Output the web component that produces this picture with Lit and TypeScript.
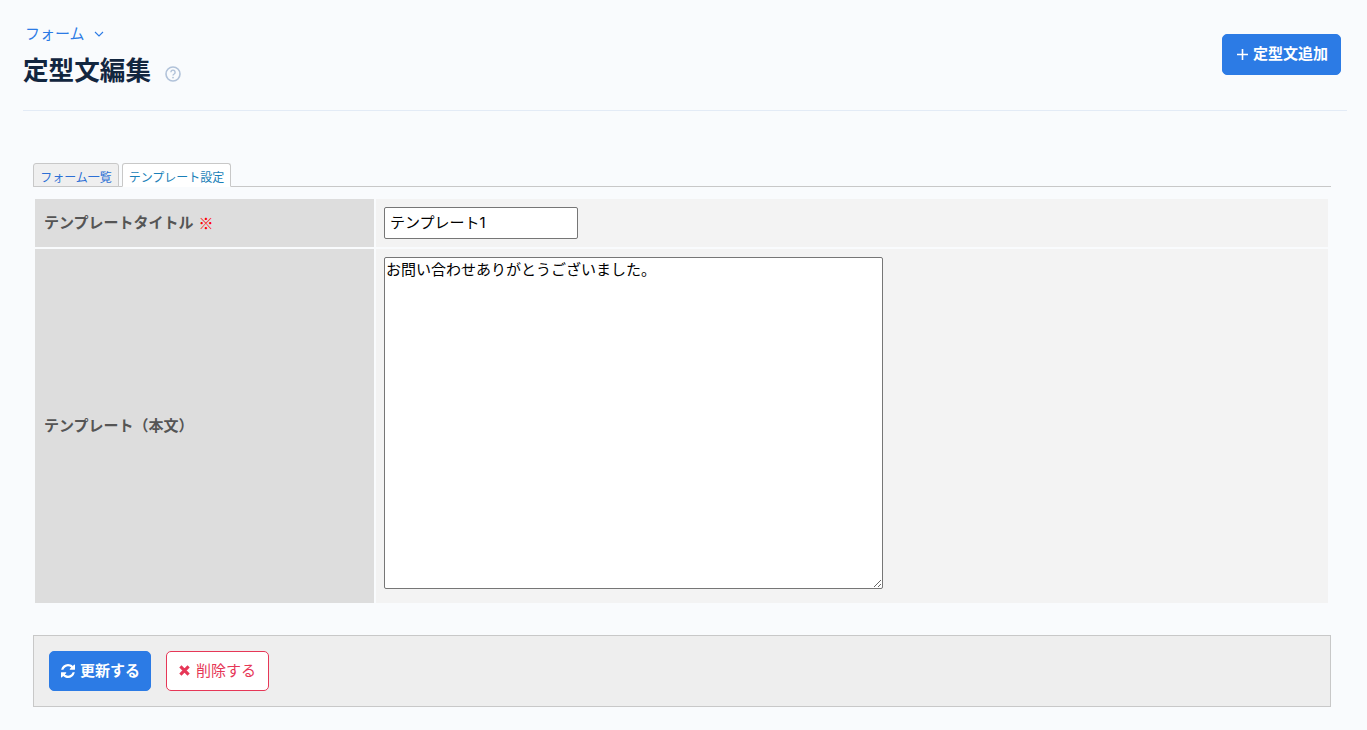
import { LitElement, html, css } from "lit";
import { customElement } from "lit/decorators.js";

@customElement("app-root")
export class AppRoot extends LitElement {
  static styles = css`
    :host {
      display: block;
      min-height: 730px;
      background: #f9fbfd;
      font-family: Inter, "Noto Sans CJK JP", sans-serif;
      box-sizing: border-box;
    }
    * { box-sizing: border-box; }
    .page { padding: 0 20px 0 23px; }
    .header {
      height: 111px;
      border-bottom: 1px solid #e3ebf6;
      display: flex;
      justify-content: space-between;
      align-items: flex-start;
    }
    .crumb {
      margin-top: 24px;
      height: 20px;
      padding-left: 2px;
      display: flex;
      align-items: center;
      gap: 9px;
      color: #2c7be5;
      font-size: 15px;
      line-height: 20px;
    }
    .title {
      margin-top: 7px;
      display: flex;
      align-items: center;
      gap: 14px;
      height: 40px;
    }
    h1 {
      margin: 0;
      font-size: 25.6px;
      line-height: 40px;
      font-weight: 700;
      color: #12263f;
    }
    .help { margin-top: 5px; display: block; }
    .btn {
      display: inline-flex;
      align-items: center;
      justify-content: center;
      border-radius: 5px;
      font-size: 15px;
      line-height: 20px;
      font-family: inherit;
      height: 40px;
      border: 1px solid #2c7be5;
      background: #2c7be5;
      color: #fff;
      font-weight: 600;
      white-space: nowrap;
      padding: 0 0 1px;
    }
    .add { width: 119px; height: 41px; margin-top: 34px; margin-right: 6px; gap: 5px; padding-left: 2px; }
    .content { padding: 52px 16px 0 10px; }
    .tabs {
      display: flex;
      gap: 3px;
      height: 24px;
      border-bottom: 1px solid #c8c8c8;
    }
    .tab {
      height: 24px;
      border: 1px solid #c8c8c8;
      border-radius: 3px 3px 0 0;
      font-size: 12px;
      line-height: 27px;
      text-align: center;
      background: #efefef;
      color: #2c6fd5;
    }
    .tab.one { width: 86px; }
    .tab.two {
      width: 109px;
      background: #fff;
      border-bottom-color: #fff;
      color: #1a7fb8;
    }
    .form {
      margin-top: 12px;
      padding: 0 3px 0 2px;
      display: grid;
      grid-template-columns: 339px 1fr;
      grid-template-rows: 48px 354px;
      gap: 2px;
    }
    .th {
      background: #dddddd;
      color: #555;
      font-size: 15px;
      line-height: 20px;
      font-weight: 700;
      padding: 0 0 1px 9px;
      display: flex;
      align-items: center;
      gap: 5px;
    }
    .req {
      color: #f00;
      font-weight: 400;
      font-size: 15px;
      font-family: "Noto Sans CJK JP", sans-serif;
    }
    .td { background: #f3f3f3; padding: 8px; }
    input {
      display: block;
      width: 194px;
      height: 32px;
      border: 1px solid #767676;
      border-radius: 2px;
      background: #fff;
      padding: 0 5px 4px;
      font-family: inherit;
      font-size: 15px;
      color: #000;
      outline: none;
    }
    textarea {
      display: block;
      width: 499px;
      height: 332px;
      border: 1px solid #767676;
      border-radius: 2px;
      background: #fff;
      padding: 2px 1px 0;
      margin: 0;
      font-family: inherit;
      font-size: 15px;
      line-height: 20px;
      color: #000;
      outline: none;
    }
    .bar {
      margin-top: 32px;
      height: 72px;
      border: 1px solid #c8c8c8;
      background: #eeeeee;
      padding: 15px;
      display: flex;
      gap: 15px;
    }
    .save { width: 102px; gap: 5px; padding-left: 1px; }
    .del {
      width: 103px;
      background: #fff;
      border-color: #e63757;
      color: #e63757;
      font-weight: 400;
      gap: 6px;
    }
  `;

  render() {
    return html`
      <div class="page">
        <div class="header">
          <div>
            <div class="crumb">
              <span>フォーム</span>
              <svg width="10" height="6" viewBox="0 0 10 6" fill="none" stroke="#2c7be5" stroke-width="1.1"><path d="M1 1l4 4 4-4"/></svg>
            </div>
            <div class="title">
              <h1>定型文編集</h1>
              <svg class="help" width="16" height="16" viewBox="0 0 16 16" fill="none" stroke="#b1c2d9" stroke-width="1.6">
                <circle cx="8" cy="8" r="7"/>
                <path d="M5.900 6.200a2.100 2.100 0 1 1 3.200 1.800c-.7.4-1.100.8-1.100 1.600" stroke-width="1.400"/>
                <circle cx="8" cy="11.600" r=".9" fill="#b1c2d9" stroke="none"/>
              </svg>
            </div>
          </div>
          <button class="btn add">
            <svg width="11" height="11" viewBox="0 0 11 11" stroke="#fff" stroke-width="1.6"><path d="M5.500 0v11M0 5.500h11"/></svg>
            <span>定型文追加</span>
          </button>
        </div>
        <div class="content">
          <div class="tabs">
            <div class="tab one">フォーム一覧</div>
            <div class="tab two">テンプレート設定</div>
          </div>
          <div class="form">
            <div class="th"><span>テンプレートタイトル</span><span class="req">※</span></div>
            <div class="td"><input type="text" .value=${"テンプレート1"} /></div>
            <div class="th"><span>テンプレート（本文）</span></div>
            <div class="td"><textarea .value=${"お問い合わせありがとうございました。"}></textarea></div>
          </div>
          <div class="bar">
            <button class="btn save">
              <svg width="14" height="14" viewBox="0 0 1536 1536" fill="#fff"><path d="M1511 928q0 5-1 7-64 268-268 434.500T764 1536q-146 0-282.500-55T238 1324l-129 129q-19 19-45 19t-45-19-19-45V960q0-26 19-45t45-19h448q26 0 45 19t19 45-19 45L420 1142q71 66 161 102t187 36q134 0 250-65t186-179q11-17 53-117 8-23 30-23h192q13 0 22.500 9.500t9.500 22.500zM1536 128v448q0 26-19 45t-45 19h-448q-26 0-45-19t-19-45 19-45l138-138q-148-137-349-137-134 0-250 65T332 500q-11 17-53 117-8 23-30 23H50q-13 0-22.500-9.500T18 608v-7q65-268 270-434.500T768 0q146 0 284 55.500T1297 212l130-129q19-19 45-19t45 19 19 45z"/></svg>
              <span>更新する</span>
            </button>
            <button class="btn del">
              <svg width="11" height="11" viewBox="0 0 12 12" stroke="#e63757" stroke-width="3.4"><path d="M1.500 1.500l9 9M10.500 1.500l-9 9"/></svg>
              <span>削除する</span>
            </button>
          </div>
        </div>
      </div>
    `;
  }
}
